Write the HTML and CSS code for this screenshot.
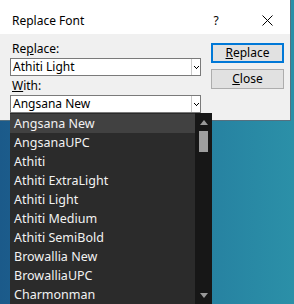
FILE: index.html
```html
<!DOCTYPE html>
<html lang="en">
<head>
    <meta charset="UTF-8">
    <meta name="viewport" content="width=device-width, initial-scale=1.0">
    <title>Replace Font</title>
    <link rel="stylesheet" href="styles.css">
</head>
<body>
    <div class="dialog">
        <div class="titlebar">
            <span class="title">Replace Font</span>
            <span class="help">?</span>
            <span class="close-x">
                <svg width="11" height="11" viewBox="0 0 11 11"><path d="M0.5 0.5L10.5 10.5M10.5 0.5L0.5 10.5" stroke="#000" stroke-width="1"/></svg>
            </span>
        </div>
        <div class="content">
            <div class="fields">
                <div class="label">Re<u>p</u>lace:</div>
                <div class="combo">
                    <span class="value">Athiti Light</span>
                    <span class="arrow"><svg width="5" height="3" viewBox="0 0 5 3"><path d="M0 0h1v1h1v1h1V1h1V0h1v1H4v1H3v1H2V2H1V1H0z" fill="#000"/></svg></span>
                </div>
                <div class="label"><u>W</u>ith:</div>
                <div class="combo">
                    <span class="value">Angsana New</span>
                    <span class="arrow"><svg width="5" height="3" viewBox="0 0 5 3"><path d="M0 0h1v1h1v1h1V1h1V0h1v1H4v1H3v1H2V2H1V1H0z" fill="#000"/></svg></span>
                </div>
            </div>
            <div class="buttons">
                <button class="button default"><u>R</u>eplace</button>
                <button class="button"><u>C</u>lose</button>
            </div>
        </div>
    </div>

    <div class="dropdown">
        <ul class="list">
            <li class="selected">Angsana New</li>
            <li>AngsanaUPC</li>
            <li>Athiti</li>
            <li>Athiti ExtraLight</li>
            <li>Athiti Light</li>
            <li>Athiti Medium</li>
            <li>Athiti SemiBold</li>
            <li>Browallia New</li>
            <li>BrowalliaUPC</li>
            <li>Charmonman</li>
        </ul>
        <div class="scrollbar">
            <span class="tri up"></span>
            <span class="thumb"></span>
            <span class="tri down"></span>
        </div>
    </div>
</body>
</html>
```

FILE: styles.css
```css
body {
    margin: 0;
    width: 294px;
    height: 304px;
    overflow: hidden;
    background: linear-gradient(to right, #1b5a8a 0%, #23779c 50%, #2b90a8 100%);
    font-family: "Noto Sans", "Liberation Sans", sans-serif;
    font-size: 12px;
    color: #000;
    position: relative;
}

.dialog {
    width: 290px;
    height: 120px;
    background-color: #f0f0f0;
    border-right: 1px solid #56707f;
    border-bottom: 1px solid #56707f;
}

.titlebar {
    height: 34px;
    box-sizing: border-box;
    padding-top: 6px;
    background-color: #fff;
    display: flex;
    align-items: center;
}

.title {
    margin-left: 12px;
    flex: 1;
    font-size: 12px;
}

.help {
    width: 20px;
    text-align: center;
    margin-right: 36px;
}

.close-x {
    display: flex;
    margin-right: 17px;
}

.content {
    display: flex;
    padding: 7px 6px 0 10px;
}

.fields {
    width: 191px;
}

.label {
    height: 16px;
    line-height: 16px;
    padding-left: 2px;
}

.combo {
    height: 16px;
    border: 1px solid #7a7a7a;
    background-color: #fff;
    display: flex;
    margin: 1px 0 2px;
}

.combo .value {
    flex: 1;
    line-height: 16px;
    padding-left: 2px;
}

.combo .arrow {
    width: 8px;
    border-left: 1px solid #c8c8c8;
    display: flex;
    justify-content: center;
    align-items: center;
}

.buttons {
    margin-left: 10px;
    padding-top: 2px;
    display: flex;
    flex-direction: column;
    gap: 6px;
}

.button {
    width: 73px;
    height: 20px;
    padding: 0;
    font-family: inherit;
    font-size: 12px;
    color: #000;
    background-color: #e1e1e1;
    border: 1px solid #adadad;
    line-height: 16px;
}

.button.default {
    border: 2px solid #0078d7;
}

.dropdown {
    position: absolute;
    left: 10px;
    top: 113px;
    width: 202px;
    height: 191px;
    display: flex;
    background-color: #2b2b2b;
}

.list {
    list-style: none;
    margin: 0;
    padding: 1px 0 0;
    flex: 1;
}

.list li {
    height: 19px;
    line-height: 19px;
    padding-left: 4px;
    color: #f2f2f2;
    font-size: 12.5px;
}

.list li.selected {
    background-color: #414141;
}

.scrollbar {
    width: 17px;
    background-color: #171717;
    display: flex;
    flex-direction: column;
    align-items: center;
}

.tri {
    width: 0;
    height: 0;
    border-left: 4px solid transparent;
    border-right: 4px solid transparent;
}

.tri.up {
    margin-top: 7px;
    border-bottom: 5px solid #9a9a9a;
}

.tri.down {
    margin-top: auto;
    margin-bottom: 6px;
    border-top: 5px solid #9a9a9a;
}

.thumb {
    width: 9px;
    height: 21px;
    margin-top: 6px;
    background-color: #9e9e9e;
}
```
